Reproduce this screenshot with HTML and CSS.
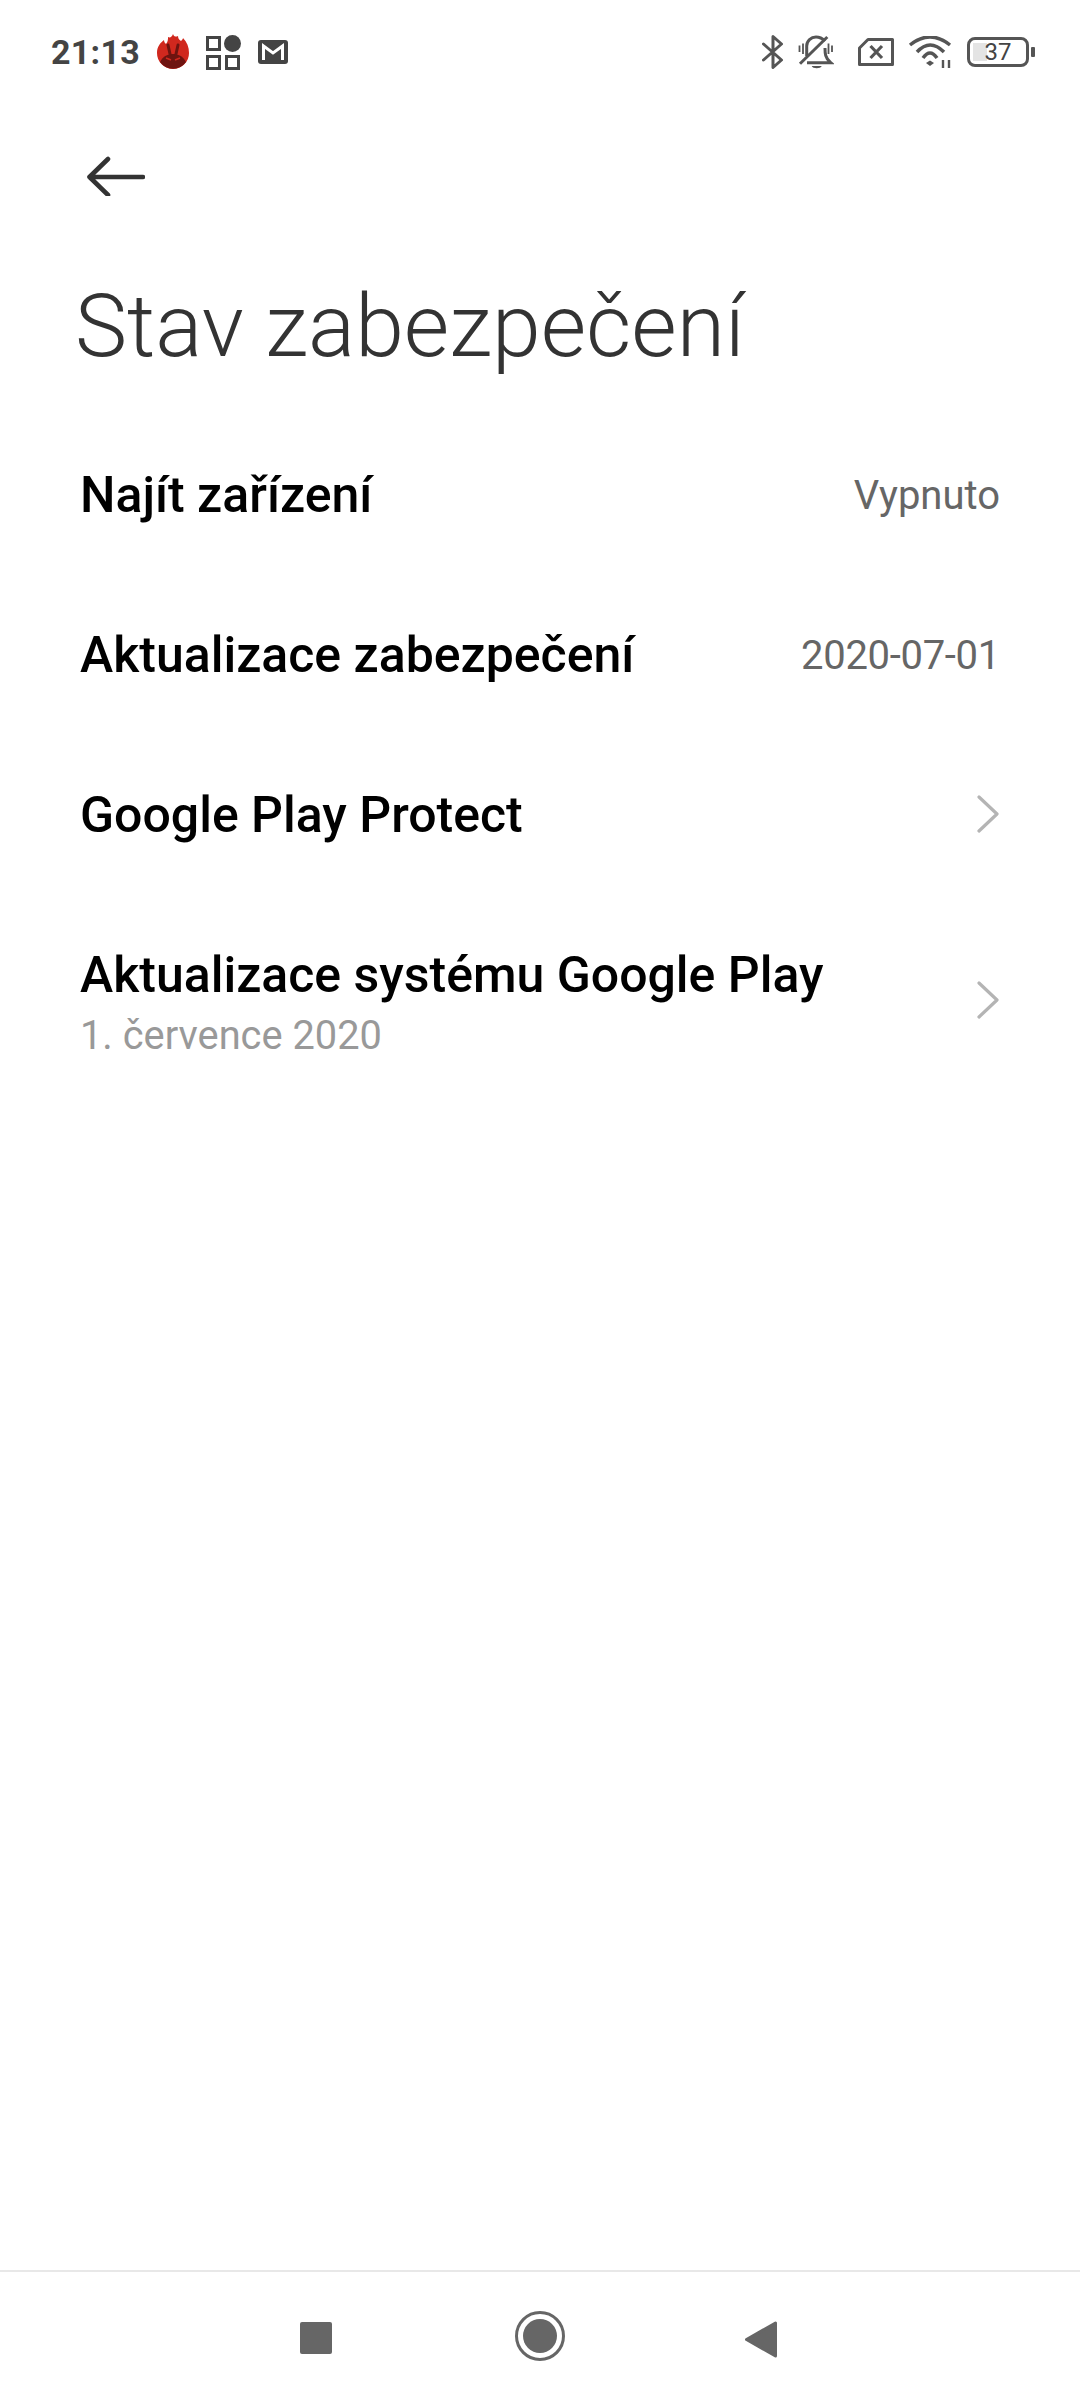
FILE: index.html
```html
<!DOCTYPE html>
<html lang="cs">
<head>
<meta charset="utf-8">
<title>Stav zabezpečení</title>
<link rel="stylesheet" href="styles.css">
</head>
<body>
<div class="screen">
  <header class="status">
    <div class="status-left">
      <span class="time">21:13</span>
      <svg class="ic-antutu" viewBox="0 0 32 36"><path d="M16 0c1 3 3 3 5 2 0 2 1 4 3 5 1-1 2-2 2-3 4 4 6 9 6 15a16 16 0 0 1-32 0C0 13 3 9 7 6c0 2 1 3 2 4 2-2 2-5 2-7 2 1 4 0 5-3z" fill="#d0281e"/><path d="M3 28c3-6 8-8 13-8s10 2 13 8a16 16 0 0 1-26 0z" fill="#6e1410"/><path d="M11 11l2 9M21 11l-2 9" stroke="#6e1410" stroke-width="3" stroke-linecap="round"/><path d="M9 24l5 2M23 24l-5 2" stroke="#d0281e" stroke-width="1.6"/></svg>
      <svg class="ic-grid" viewBox="0 0 35 35"><g fill="none" stroke="#444" stroke-width="3"><rect x="1.5" y="2.5" width="12" height="12"/><rect x="1.5" y="21.500" width="12" height="12"/><rect x="20.500" y="21.500" width="12" height="12"/></g><circle cx="26.500" cy="8.500" r="8.500" fill="#444"/></svg>
      <svg class="ic-mail" viewBox="0 0 30 24"><rect width="30" height="24" rx="3" fill="#444"/><path d="M5.500 20V6l9.500 7 9.500-7v14" fill="none" stroke="#fff" stroke-width="3"/></svg>
    </div>
    <div class="status-right">
      <svg class="ic-bt" viewBox="0 0 22 34"><path d="M1.500 9l18 16-8.500 7.500V1.500L19.500 9l-18 16" fill="none" stroke="#555" stroke-width="3" stroke-linejoin="round" stroke-linecap="round"/></svg>
      <svg class="ic-bell" viewBox="0 0 36 34"><path d="M8.700 21V11C8.700 6 13 2 18 2c3.500 0 6.500 1.500 9 4M27 13c0 5 0 10 5.700 14.700H9" fill="none" stroke="#555" stroke-width="3"/><path d="M13.700 31h10c-1 3-9 3-10 0z" fill="#555"/><path d="M2 28.700L29.300 2" stroke="#555" stroke-width="3"/><path d="M1.500 10.500v6.500M5 8.500v10.500M30.500 8.500v10.500M34 10.500v6.500" stroke="#555" stroke-width="1.800"/></svg>
      <svg class="ic-sim" viewBox="0 0 36 28"><path d="M10 1.500h24.500v25h-33V10z" fill="none" stroke="#555" stroke-width="3" stroke-linejoin="round"/><path d="M12.500 8l11.500 12M24 8L12.500 20" stroke="#555" stroke-width="3.200"/></svg>
      <svg class="ic-wifi" viewBox="0 0 44 32"><g fill="none" stroke="#555" stroke-width="3.500"><path d="M2 9Q22-7 42 9"/><path d="M9 16Q22 2 36 16"/><path d="M15 22Q22 12 29 22"/></g><path d="M18 27l4-2.500 4 2.500-4 3z" fill="#555"/><path d="M35 24v8M41 24v8" stroke="#555" stroke-width="2.400"/></svg>
      <div class="battery">
        <div class="battery-body"><span class="battery-fill"></span><span class="battery-num">37</span></div>
        <span class="battery-nub"></span>
      </div>
    </div>
  </header>

  <nav class="toolbar">
    <svg class="ic-back" viewBox="0 0 58 40"><path d="M21 3L2.500 21 21 39M2.500 21H56" fill="none" stroke="#333" stroke-width="4.600" stroke-linecap="round" stroke-linejoin="round"/></svg>
  </nav>

  <h1 class="title">Stav zabezpečení</h1>

  <main class="list">
    <div class="row">
      <span class="row-title">Najít zařízení</span>
      <span class="row-value">Vypnuto</span>
    </div>
    <div class="row">
      <span class="row-title">Aktualizace zabezpečení</span>
      <span class="row-value row-date">2020-07-01</span>
    </div>
    <div class="row">
      <span class="row-title">Google Play Protect</span>
      <svg class="chev" viewBox="0 0 22 38"><path d="M2 2l18 17L2 36" fill="none" stroke="#b4b4b4" stroke-width="3.200" stroke-linecap="round" stroke-linejoin="round"/></svg>
    </div>
    <div class="row row-tall">
      <div class="row-text">
        <span class="row-title">Aktualizace systému Google Play</span>
        <span class="row-sub">1. července 2020</span>
      </div>
      <svg class="chev" viewBox="0 0 22 38"><path d="M2 2l18 17L2 36" fill="none" stroke="#b4b4b4" stroke-width="3.200" stroke-linecap="round" stroke-linejoin="round"/></svg>
    </div>
  </main>

  <footer class="navbar">
    <svg class="nav-square" viewBox="0 0 32 32"><rect width="32" height="32" rx="2" fill="#666"/></svg>
    <svg class="nav-home" viewBox="0 0 50 50"><circle cx="25" cy="25" r="23.500" fill="none" stroke="#666" stroke-width="3"/><circle cx="25" cy="25" r="17" fill="#666"/></svg>
    <svg class="nav-back" viewBox="0 0 32 37"><path d="M30.500 2v33L1.500 18.500z" fill="#666" stroke="#666" stroke-width="3" stroke-linejoin="round"/></svg>
  </footer>
</div>
</body>
</html>
```
FILE: styles.css
```css
* { box-sizing: border-box; }
html, body { margin: 0; padding: 0; background: #fff; }
body { font-family: Roboto, "Noto Sans", sans-serif; }
.screen { width: 1080px; height: 2400px; display: flex; flex-direction: column; overflow: hidden; background: #fff; }

.status { height: 104px; flex: none; display: flex; justify-content: space-between; align-items: center; padding: 0 45px 0 51px; }
.status-left, .status-right { display: flex; align-items: center; }
.time { width: 87px; font-size: 34px; font-weight: 700; color: #444; letter-spacing: 0.3px; line-height: 40px; margin-right: 19px; white-space: nowrap; }
.ic-antutu { width: 32px; height: 36px; margin-right: 17px; }
.ic-grid { width: 35px; height: 35px; margin-right: 17px; }
.ic-mail { width: 30px; height: 24px; }
.ic-bt { width: 22px; height: 34px; margin-right: 14px; }
.ic-bell { width: 36px; height: 34px; margin-right: 24px; }
.ic-sim { width: 36px; height: 28px; margin-right: 14px; }
.ic-wifi { width: 44px; height: 32px; margin-right: 15px; }
.battery { display: flex; align-items: center; gap: 2px; }
.battery-body { position: relative; width: 62px; height: 30px; border: 3.5px solid #555; border-radius: 8px; display: flex; align-items: center; justify-content: center; }
.battery-fill { position: absolute; left: 3px; top: 3px; bottom: 3px; width: 14px; background: #e4e4e4; }
.battery-num { position: relative; font-size: 24px; line-height: 24px; color: #444; }
.battery-nub { width: 4px; height: 10px; background: #555; border-radius: 1px; }

.toolbar { height: 100px; flex: none; display: flex; align-items: center; padding: 0 0 0 87px; margin-top: 22px; }
.ic-back { width: 58px; height: 40px; }

.title { margin: 40px 0 0; padding: 0 0 0 75px; font-size: 87.8px; line-height: 120px; font-weight: 300; color: #333; height: 120px; flex: none; letter-spacing: 0; }

.list { flex: 1; display: flex; flex-direction: column; padding: 29px 0 0; }
.row { height: 160px; flex: none; display: flex; align-items: center; justify-content: space-between; padding: 0 80px; }
.row-tall { height: 212px; }
.row-text { display: flex; flex-direction: column; margin-top: 3px; }
.row-title { font-size: 50px; line-height: 60px; font-weight: 500; color: #000; }
.row-value { font-size: 40px; line-height: 50px; color: #666; padding-top: 2px; }
.row-date { letter-spacing: -0.3px; }
.row-sub { font-size: 39.8px; line-height: 50px; color: #999; margin-top: 6px; }
.chev { width: 22px; height: 38px; margin: 0 1px 3px 0; }

.navbar { height: 130px; flex: none; border-top: 2px solid #e8e8e8; display: flex; align-items: center; padding: 0 0 0 300px; }
.nav-square { width: 32px; height: 32px; margin-right: 183px; margin-top: 4px; }
.nav-home { width: 50px; height: 50px; margin-right: 180px; }
.nav-back { width: 32px; height: 37px; margin-top: 6px; }
```
